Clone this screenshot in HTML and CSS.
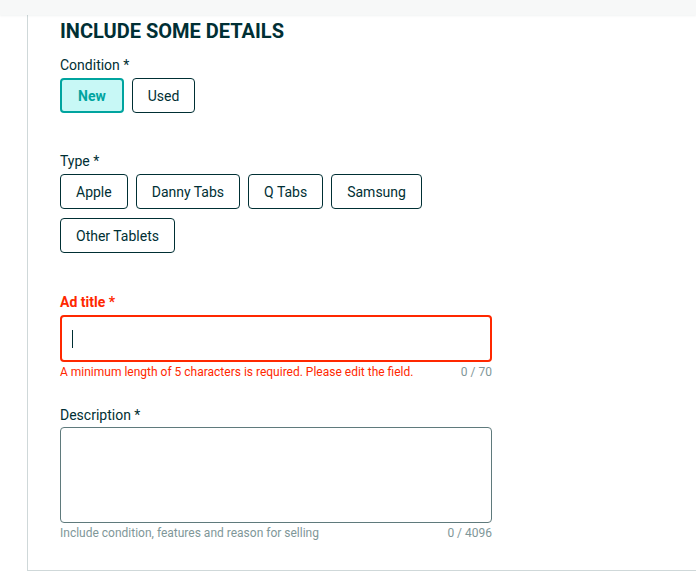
FILE: index.html
```html
<!DOCTYPE html>
<html lang="en">
<head>
<meta charset="utf-8">
<title>Include some details</title>
<link rel="stylesheet" href="styles.css">
</head>
<body>
<div class="topbar"></div>
<main class="main">
  <h2 class="heading">INCLUDE SOME DETAILS</h2>

  <div class="field">
    <div class="label">Condition *</div>
    <div class="options">
      <button class="opt selected">New</button>
      <button class="opt">Used</button>
    </div>
  </div>

  <div class="field type-field">
    <div class="label">Type *</div>
    <div class="options">
      <button class="opt">Apple</button>
      <button class="opt">Danny Tabs</button>
      <button class="opt">Q Tabs</button>
      <button class="opt">Samsung</button>
      <button class="opt">Other Tablets</button>
    </div>
  </div>

  <div class="field title-field">
    <div class="label error-label">Ad title *</div>
    <div class="input error-input"><span class="caret"></span></div>
    <div class="hint error-hint"><span>A minimum length of 5 characters is required. Please edit the field.</span><span class="count">0 / 70</span></div>
  </div>

  <div class="field desc-field">
    <div class="label">Description *</div>
    <div class="textarea"></div>
    <div class="hint"><span>Include condition, features and reason for selling</span><span class="count">0 / 4096</span></div>
  </div>
</main>
</body>
</html>
```

FILE: styles.css
```css
html, body {
  margin: 0;
  padding: 0;
  background: #ffffff;
}
body {
  font-family: Roboto, "Liberation Sans", Arial, sans-serif;
  color: #002f34;
  width: 696px;
  height: 574px;
  overflow: hidden;
}
.topbar {
  height: 15px;
  background: #f7f8f8;
  box-shadow: 0 1px 2px rgba(0, 47, 52, 0.06);
  position: relative;
  z-index: 1;
}
.main {
  margin-left: 27px;
  height: 556px;
  border-left: 1px solid #cfd8d9;
  border-bottom: 1px solid #cfd8d9;
  padding: 4px 0 0 32px;
  box-sizing: border-box;
  display: flex;
  flex-direction: column;
}
.heading {
  margin: 0;
  font-size: 20px;
  line-height: 24px;
  font-weight: 700;
  color: #002f34;
}
.field {
  display: flex;
  flex-direction: column;
  width: 432px;
  margin-top: 12px;
}
.type-field { margin-top: 38px; }
.title-field { margin-top: 39px; }
.desc-field { margin-top: 25px; }
.label {
  font-size: 14px;
  line-height: 20px;
  margin-bottom: 3px;
  color: #002f34;
}
.error-label {
  color: #ff2800;
  font-weight: 700;
  margin-bottom: 3px;
}
.options {
  display: flex;
  flex-wrap: wrap;
  gap: 9px 8px;
}
.opt {
  height: 35px;
  padding: 0 15px;
  box-sizing: border-box;
  border: 1px solid #002f34;
  border-radius: 4px;
  background: #ffffff;
  font-family: Roboto, "Liberation Sans", Arial, sans-serif;
  font-size: 14px;
  color: #002f34;
  cursor: pointer;
}
.opt.selected {
  border: 2px solid #00a49f;
  background: #c8f8f6;
  color: #00a49f;
  font-weight: 700;
  padding: 0 16px;
}
.input {
  height: 47px;
  box-sizing: border-box;
  border: 1px solid #5f7a7c;
  border-radius: 4px;
  padding-left: 10px;
  display: flex;
  align-items: center;
}
.error-input {
  border: 2px solid #ff2800;
}
.caret {
  display: block;
  width: 1px;
  height: 18px;
  background: #002f34;
}
.textarea {
  height: 96px;
  box-sizing: border-box;
  border: 1px solid #5f7a7c;
  border-radius: 4px;
  margin-top: -1px;
}
.hint {
  display: flex;
  justify-content: space-between;
  font-size: 12px;
  line-height: 16px;
  margin-top: 2px;
  color: #7f9799;
}
.error-hint {
  color: #ff2800;
}
.count {
  color: #7f9799;
}
```
